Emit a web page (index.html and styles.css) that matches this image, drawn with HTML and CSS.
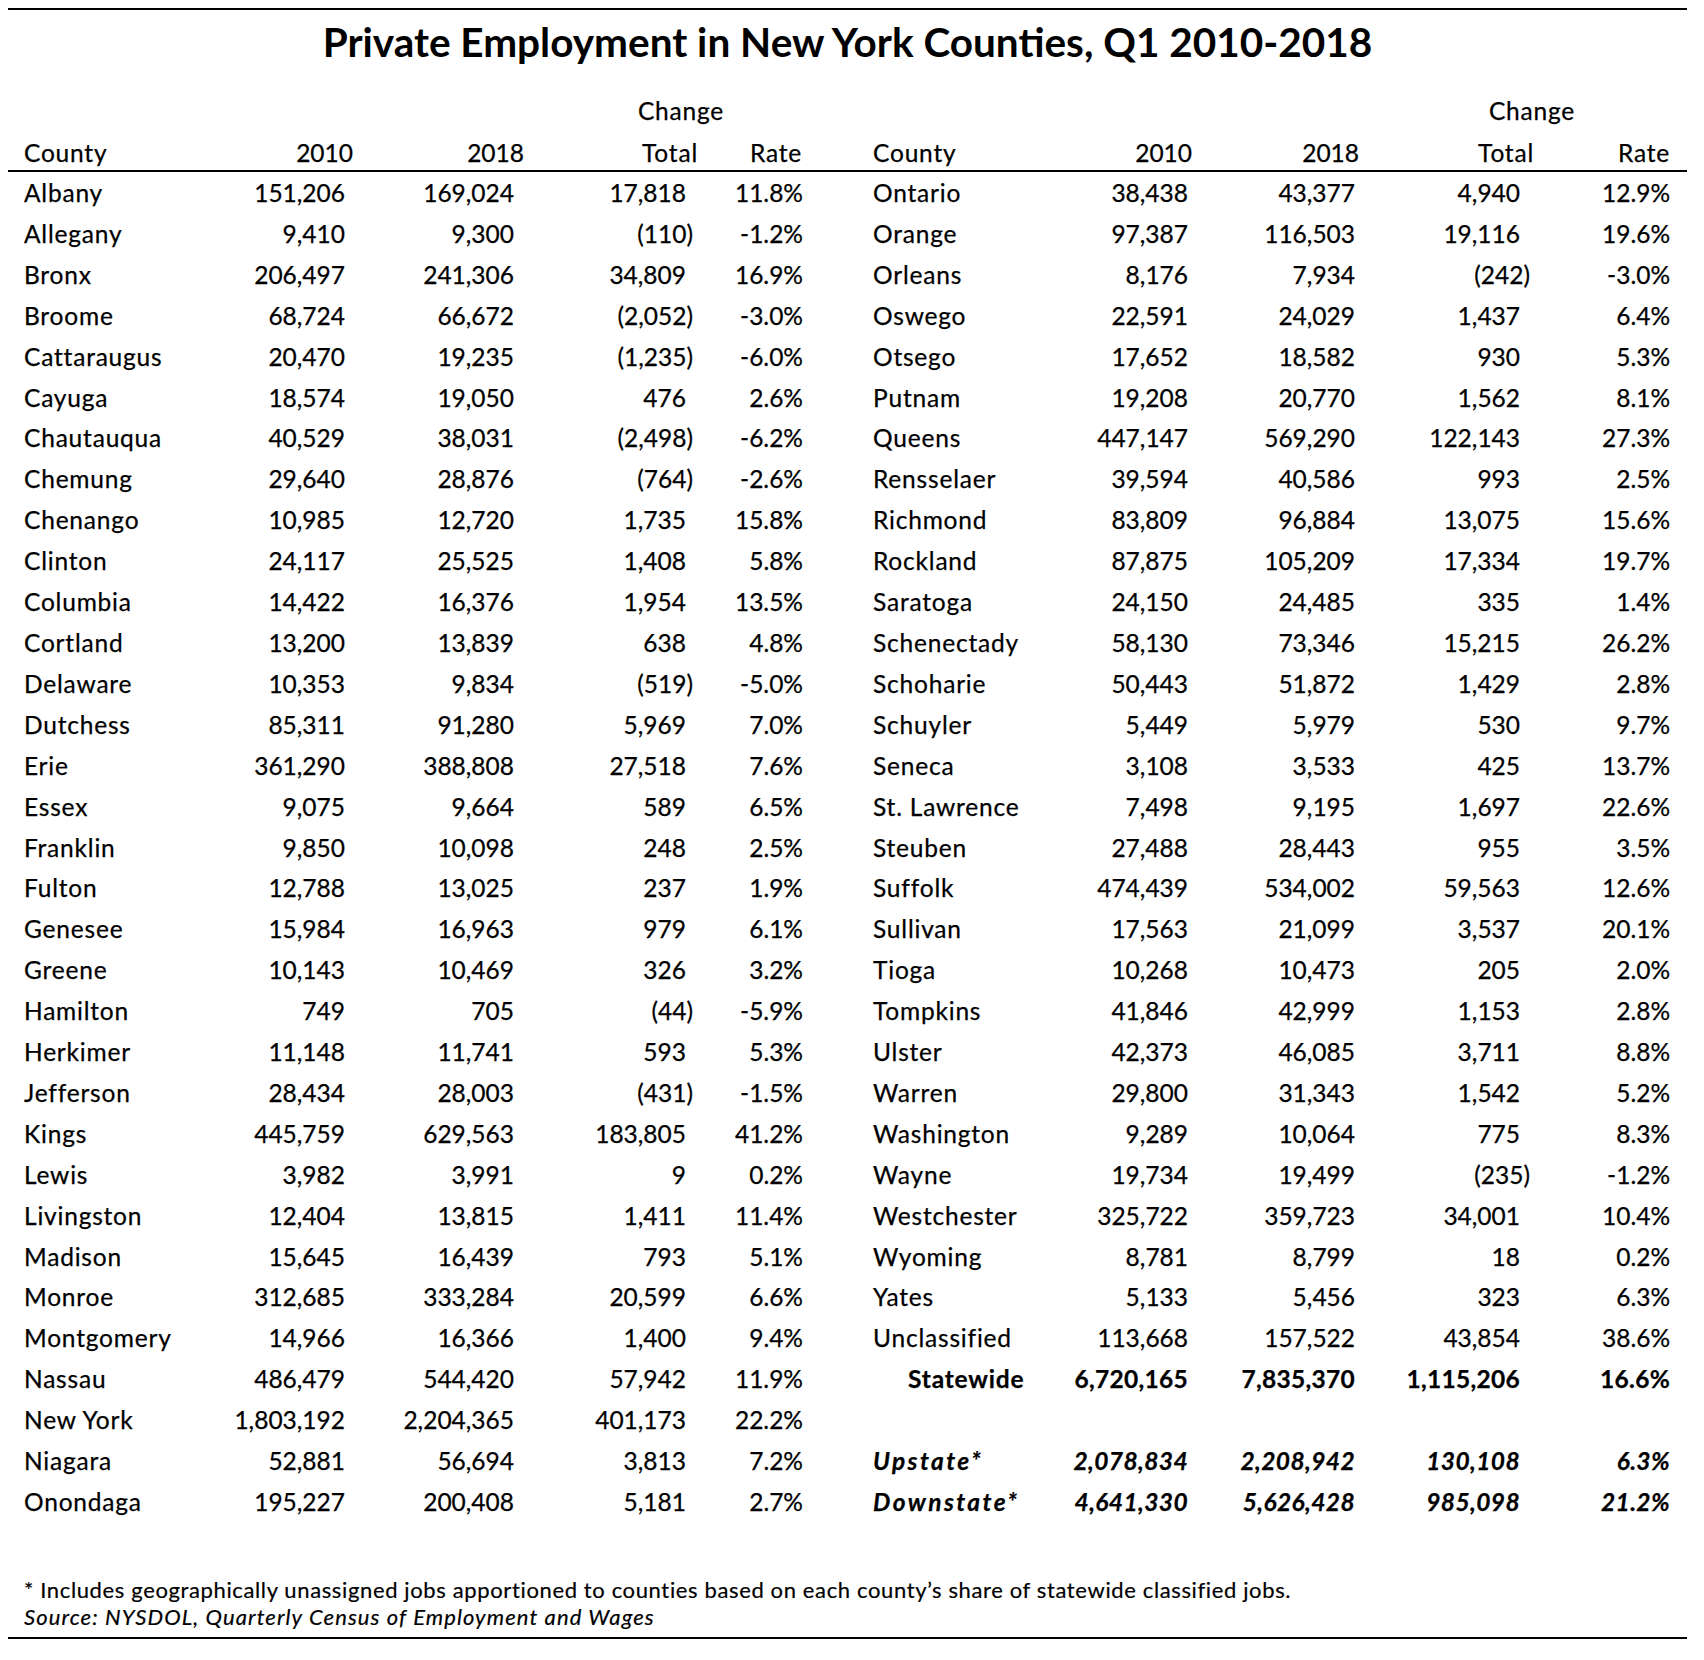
FILE: index.html
```html
<!DOCTYPE html>
<html lang="en">
<head>
    <meta charset="UTF-8">
    <title>Private Employment in New York Counties, Q1 2010-2018</title>
    <link rel="stylesheet" href="styles.css">
</head>
<body>
    <div class="sheet">
        <h1>Private Employment in New York Counties, Q1 2010-2018</h1>

        <table class="counties">
            <colgroup>
                <col class="c-name"><col class="c-2010"><col class="c-2018"><col class="c-total"><col class="c-rate">
                <col class="c-name2"><col class="c-2010b"><col class="c-2018b"><col class="c-totalb"><col class="c-rateb">
                <col class="c-fill">
            </colgroup>
            <thead>
                <tr class="group">
                    <th></th><th></th><th></th>
                    <th colspan="2" class="change">Change</th>
                    <th></th><th></th><th></th>
                    <th colspan="2" class="change">Change</th>
                    <th></th>
                </tr>
                <tr class="heads">
                    <th class="name">County</th><th>2010</th><th>2018</th><th class="word">Total</th><th class="word rate">Rate</th>
                    <th class="name">County</th><th>2010</th><th>2018</th><th class="word">Total</th><th class="word">Rate</th>
                    <th></th>
                </tr>
            </thead>
            <tbody>
                <tr><td>Albany</td><td>151,206</td><td>169,024</td><td>17,818</td><td>11.8%</td><td>Ontario</td><td>38,438</td><td>43,377</td><td>4,940</td><td>12.9%</td></tr>
                <tr><td>Allegany</td><td>9,410</td><td>9,300</td><td class="neg">(110)</td><td>-1.2%</td><td>Orange</td><td>97,387</td><td>116,503</td><td>19,116</td><td>19.6%</td></tr>
                <tr><td>Bronx</td><td>206,497</td><td>241,306</td><td>34,809</td><td>16.9%</td><td>Orleans</td><td>8,176</td><td>7,934</td><td class="neg">(242)</td><td>-3.0%</td></tr>
                <tr><td>Broome</td><td>68,724</td><td>66,672</td><td class="neg">(2,052)</td><td>-3.0%</td><td>Oswego</td><td>22,591</td><td>24,029</td><td>1,437</td><td>6.4%</td></tr>
                <tr><td>Cattaraugus</td><td>20,470</td><td>19,235</td><td class="neg">(1,235)</td><td>-6.0%</td><td>Otsego</td><td>17,652</td><td>18,582</td><td>930</td><td>5.3%</td></tr>
                <tr><td>Cayuga</td><td>18,574</td><td>19,050</td><td>476</td><td>2.6%</td><td>Putnam</td><td>19,208</td><td>20,770</td><td>1,562</td><td>8.1%</td></tr>
                <tr><td>Chautauqua</td><td>40,529</td><td>38,031</td><td class="neg">(2,498)</td><td>-6.2%</td><td>Queens</td><td>447,147</td><td>569,290</td><td>122,143</td><td>27.3%</td></tr>
                <tr><td>Chemung</td><td>29,640</td><td>28,876</td><td class="neg">(764)</td><td>-2.6%</td><td>Rensselaer</td><td>39,594</td><td>40,586</td><td>993</td><td>2.5%</td></tr>
                <tr><td>Chenango</td><td>10,985</td><td>12,720</td><td>1,735</td><td>15.8%</td><td>Richmond</td><td>83,809</td><td>96,884</td><td>13,075</td><td>15.6%</td></tr>
                <tr><td>Clinton</td><td>24,117</td><td>25,525</td><td>1,408</td><td>5.8%</td><td>Rockland</td><td>87,875</td><td>105,209</td><td>17,334</td><td>19.7%</td></tr>
                <tr><td>Columbia</td><td>14,422</td><td>16,376</td><td>1,954</td><td>13.5%</td><td>Saratoga</td><td>24,150</td><td>24,485</td><td>335</td><td>1.4%</td></tr>
                <tr><td>Cortland</td><td>13,200</td><td>13,839</td><td>638</td><td>4.8%</td><td>Schenectady</td><td>58,130</td><td>73,346</td><td>15,215</td><td>26.2%</td></tr>
                <tr><td>Delaware</td><td>10,353</td><td>9,834</td><td class="neg">(519)</td><td>-5.0%</td><td>Schoharie</td><td>50,443</td><td>51,872</td><td>1,429</td><td>2.8%</td></tr>
                <tr><td>Dutchess</td><td>85,311</td><td>91,280</td><td>5,969</td><td>7.0%</td><td>Schuyler</td><td>5,449</td><td>5,979</td><td>530</td><td>9.7%</td></tr>
                <tr><td>Erie</td><td>361,290</td><td>388,808</td><td>27,518</td><td>7.6%</td><td>Seneca</td><td>3,108</td><td>3,533</td><td>425</td><td>13.7%</td></tr>
                <tr><td>Essex</td><td>9,075</td><td>9,664</td><td>589</td><td>6.5%</td><td>St. Lawrence</td><td>7,498</td><td>9,195</td><td>1,697</td><td>22.6%</td></tr>
                <tr><td>Franklin</td><td>9,850</td><td>10,098</td><td>248</td><td>2.5%</td><td>Steuben</td><td>27,488</td><td>28,443</td><td>955</td><td>3.5%</td></tr>
                <tr><td>Fulton</td><td>12,788</td><td>13,025</td><td>237</td><td>1.9%</td><td>Suffolk</td><td>474,439</td><td>534,002</td><td>59,563</td><td>12.6%</td></tr>
                <tr><td>Genesee</td><td>15,984</td><td>16,963</td><td>979</td><td>6.1%</td><td>Sullivan</td><td>17,563</td><td>21,099</td><td>3,537</td><td>20.1%</td></tr>
                <tr><td>Greene</td><td>10,143</td><td>10,469</td><td>326</td><td>3.2%</td><td>Tioga</td><td>10,268</td><td>10,473</td><td>205</td><td>2.0%</td></tr>
                <tr><td>Hamilton</td><td>749</td><td>705</td><td class="neg">(44)</td><td>-5.9%</td><td>Tompkins</td><td>41,846</td><td>42,999</td><td>1,153</td><td>2.8%</td></tr>
                <tr><td>Herkimer</td><td>11,148</td><td>11,741</td><td>593</td><td>5.3%</td><td>Ulster</td><td>42,373</td><td>46,085</td><td>3,711</td><td>8.8%</td></tr>
                <tr><td>Jefferson</td><td>28,434</td><td>28,003</td><td class="neg">(431)</td><td>-1.5%</td><td>Warren</td><td>29,800</td><td>31,343</td><td>1,542</td><td>5.2%</td></tr>
                <tr><td>Kings</td><td>445,759</td><td>629,563</td><td>183,805</td><td>41.2%</td><td>Washington</td><td>9,289</td><td>10,064</td><td>775</td><td>8.3%</td></tr>
                <tr><td>Lewis</td><td>3,982</td><td>3,991</td><td>9</td><td>0.2%</td><td>Wayne</td><td>19,734</td><td>19,499</td><td class="neg">(235)</td><td>-1.2%</td></tr>
                <tr><td>Livingston</td><td>12,404</td><td>13,815</td><td>1,411</td><td>11.4%</td><td>Westchester</td><td>325,722</td><td>359,723</td><td>34,001</td><td>10.4%</td></tr>
                <tr><td>Madison</td><td>15,645</td><td>16,439</td><td>793</td><td>5.1%</td><td>Wyoming</td><td>8,781</td><td>8,799</td><td>18</td><td>0.2%</td></tr>
                <tr><td>Monroe</td><td>312,685</td><td>333,284</td><td>20,599</td><td>6.6%</td><td>Yates</td><td>5,133</td><td>5,456</td><td>323</td><td>6.3%</td></tr>
                <tr><td>Montgomery</td><td>14,966</td><td>16,366</td><td>1,400</td><td>9.4%</td><td>Unclassified</td><td>113,668</td><td>157,522</td><td>43,854</td><td>38.6%</td></tr>
                <tr class="statewide"><td>Nassau</td><td>486,479</td><td>544,420</td><td>57,942</td><td>11.9%</td><td class="total-label">Statewide</td><td>6,720,165</td><td>7,835,370</td><td>1,115,206</td><td>16.6%</td></tr>
                <tr><td>New York</td><td>1,803,192</td><td>2,204,365</td><td>401,173</td><td>22.2%</td></tr>
                <tr class="region"><td>Niagara</td><td>52,881</td><td>56,694</td><td>3,813</td><td>7.2%</td><td>Upstate*</td><td>2,078,834</td><td>2,208,942</td><td>130,108</td><td>6.3%</td></tr>
                <tr class="region"><td>Onondaga</td><td>195,227</td><td>200,408</td><td>5,181</td><td>2.7%</td><td>Downstate*</td><td>4,641,330</td><td>5,626,428</td><td>985,098</td><td>21.2%</td></tr>
            </tbody>
        </table>

        <!-- notes under the table -->
        <div class="notes">
            <p>* Includes geographically unassigned jobs apportioned to counties based on each county’s share of statewide classified jobs.</p>
            <p class="source">Source: NYSDOL, Quarterly Census of Employment and Wages</p>
        </div>
    </div>
</body>
</html>
```

FILE: styles.css
```css
body {
    margin: 0;
    background-color: #fff;
    color: #000;
    font-family: Lato, "Open Sans", sans-serif;
}
.sheet {
    width: 1679px;
    margin-left: 8px;
    padding-top: 8px;
}
h1 {
    margin: 0 0 27px;
    padding-top: 7px;
    border-top: 2px solid #000;
    font-size: 40.5px;
    font-weight: 700;
    line-height: 50px;
    text-align: center;
}
.counties {
    width: 1679px;
    table-layout: fixed;
    border-collapse: separate;
    border-spacing: 0;
    font-size: 24.5px;
    -webkit-text-stroke: 0.25px #000;
}
.c-name { width: 192px; }
.c-2010 { width: 153px; }
.c-2018 { width: 171px; }
.c-total { width: 174px; }
.c-rate { width: 105px; }
.c-name2 { width: 197px; }
.c-2010b { width: 192px; }
.c-2018b { width: 167px; }
.c-totalb { width: 175px; }
.c-rateb { width: 136px; }
.c-fill { width: 17px; }

th, td {
    padding: 0;
    font-weight: 400;
    text-align: right;
    white-space: nowrap;
}
.group th {
    line-height: 34px;
    padding-bottom: 8px;
}
.group th.change {
    text-align: center;
    padding-left: 35px;
    letter-spacing: 0.8px;
}
.heads th {
    line-height: 34px;
    border-bottom: 2px solid #000;
}
.heads th.word {
    letter-spacing: 0.8px;
}
.heads th.name {
    text-align: left;
    padding-left: 16px;
    letter-spacing: 0.8px;
}
.heads th:nth-child(6) {
    padding-left: 70px;
}
.heads th.rate {
    padding-right: 1px;
}

tbody td {
    line-height: 40.9px;
}
tbody tr:first-child td {
    padding-top: 1px;
}
tbody td:nth-child(1) {
    text-align: left;
    padding-left: 16px;
    letter-spacing: 0.8px;
}
tbody td:nth-child(2) { padding-right: 8px; }
tbody td:nth-child(3) { padding-right: 10px; }
tbody td:nth-child(4) { padding-right: 12px; }
tbody td:nth-child(4).neg { padding-right: 5px; }
tbody td:nth-child(6) {
    text-align: left;
    padding-left: 70px;
    letter-spacing: 0.8px;
}
tbody td:nth-child(7) { padding-right: 4px; }
tbody td:nth-child(8) { padding-right: 4px; }
tbody td:nth-child(9) { padding-right: 14px; }
tbody td:nth-child(9).neg { padding-right: 4px; }

.statewide td:nth-child(n+6) {
    font-weight: 700;
    letter-spacing: 0.3px;
}
tbody .statewide td.total-label {
    padding-left: 105px;
    letter-spacing: 0.8px;
}
.region td:nth-child(n+6) {
    font-weight: 700;
    font-style: italic;
    letter-spacing: 0.4px;
}
tbody .region td:nth-child(6) {
    letter-spacing: 2.4px;
}

.notes {
    margin-top: 53px;
    padding: 0 0 7px 16px;
    border-bottom: 2px solid #000;
    font-size: 22px;
    line-height: 27px;
    letter-spacing: 0.63px;
    -webkit-text-stroke: 0.2px #000;
}
.notes p {
    margin: 0;
}
.notes .source {
    font-style: italic;
    letter-spacing: 1.1px;
}
```
